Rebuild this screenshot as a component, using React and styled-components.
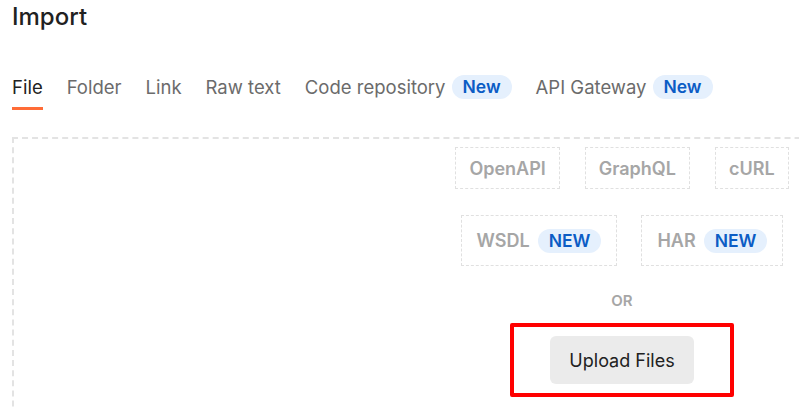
import React from 'react';
import styled, { createGlobalStyle } from 'styled-components';

const GlobalStyle = createGlobalStyle`
  body {
    margin: 0;
    background: #ffffff;
    font-family: Inter, "Noto Sans", sans-serif;
    overflow: hidden;
  }
`;

const Page = styled.div`
  padding: 2px 12px 0;
  width: 1300px;
`;

const Title = styled.h1`
  margin: 0;
  font-size: 24px;
  line-height: 30px;
  font-weight: 500;
  color: #212121;
`;

const TabBar = styled.div`
  display: flex;
  align-items: center;
  gap: 24px;
  margin-top: 43px;
`;

const Tab = styled.div`
  display: flex;
  align-items: center;
  gap: 6px;
  line-height: 24px;
  padding-bottom: 8px;
  font-size: 18.5px;
  color: ${(p) => (p.$active ? '#212121' : '#6b6b6b')};
  border-bottom: 3px solid ${(p) => (p.$active ? '#ff6c37' : 'transparent')};
`;

const Badge = styled.span`
  display: inline-flex;
  align-items: center;
  height: 24px;
  padding: 0 11px;
  border-radius: 12px;
  background: #e5f0fd;
  color: #0b5cc5;
  font-weight: 600;
  font-size: 17.5px;
`;

const DropZone = styled.div`
  margin-top: 27px;
  width: 1220px;
  height: 300px;
  border: 2px dashed #e3e3e3;
  box-sizing: border-box;
  display: flex;
  flex-direction: column;
  align-items: center;
  padding-top: 8px;
`;

const Row = styled.div`
  display: flex;
  gap: ${(p) => p.$gap}px;
  margin-bottom: ${(p) => p.$mb}px;
`;

const Source = styled.div`
  display: flex;
  align-items: center;
  gap: 8px;
  height: ${(p) => p.$h}px;
  padding: 0 ${(p) => p.$px}px;
  border: 1px dashed #e0e0e0;
  box-sizing: border-box;
  font-size: 18px;
  font-weight: 600;
  color: #a6a6a6;
`;

const Or = styled.div`
  font-size: 15px;
  line-height: 18px;
  font-weight: 600;
  color: #a6a6a6;
  margin-bottom: 13px;
`;

const Highlight = styled.div`
  border: 4px solid #ff0000;
  border-radius: 2px;
  padding: 9px 36px;
`;

const UploadButton = styled.button`
  height: 48px;
  padding: 0 19px;
  border: none;
  border-radius: 6px;
  background: #ebebeb;
  color: #212121;
  font-family: Inter, "Noto Sans", sans-serif;
  font-size: 18px;
`;

export default function App() {
  return (
    <Page>
      <GlobalStyle />
      <Title>Import</Title>
      <TabBar>
        <Tab $active>File</Tab>
        <Tab>Folder</Tab>
        <Tab>Link</Tab>
        <Tab>Raw text</Tab>
        <Tab>
          Code repository <Badge>New</Badge>
        </Tab>
        <Tab>
          API Gateway <Badge>New</Badge>
        </Tab>
      </TabBar>
      <DropZone>
        <Row $gap={25} $mb={26}>
          <Source $h={42} $px={13}>OpenAPI</Source>
          <Source $h={42} $px={13}>GraphQL</Source>
          <Source $h={42} $px={13}>cURL</Source>
        </Row>
        <Row $gap={24} $mb={26}>
          <Source $h={51} $px={15}>
            WSDL <Badge>NEW</Badge>
          </Source>
          <Source $h={51} $px={15}>
            HAR <Badge>NEW</Badge>
          </Source>
        </Row>
        <Or>OR</Or>
        <Highlight>
          <UploadButton>Upload Files</UploadButton>
        </Highlight>
      </DropZone>
    </Page>
  );
}
